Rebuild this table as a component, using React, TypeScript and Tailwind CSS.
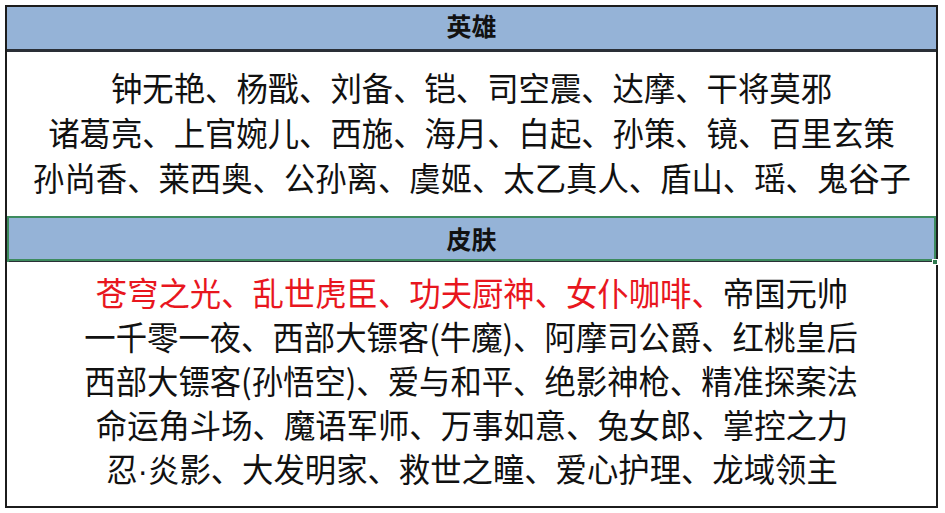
import React from 'react';

const heroLines = [
  '钟无艳、杨戬、刘备、铠、司空震、达摩、干将莫邪',
  '诸葛亮、上官婉儿、西施、海月、白起、孙策、镜、百里玄策',
  '孙尚香、莱西奥、公孙离、虞姬、太乙真人、盾山、瑶、鬼谷子',
];

const skinLines = [
  '一千零一夜、西部大镖客(牛魔)、阿摩司公爵、红桃皇后',
  '西部大镖客(孙悟空)、爱与和平、绝影神枪、精准探案法',
  '命运角斗场、魔语军师、万事如意、兔女郎、掌控之力',
];

const font = { fontFamily: '"Microsoft YaHei", "Noto Sans CJK SC", "Noto Sans", sans-serif' };

export default function App() {
  return (
    <div className="w-[945px] h-[513px] bg-white pt-[5px] pl-[5px]" style={font}>
      <div className="w-[933px] h-[503px] border-2 border-[#1c1c1c] flex flex-col">
        {/* 英雄 header */}
        <div className="h-[45px] bg-[#95b3d7] border-b-[3px] border-[#2a2f36] flex items-center justify-center pb-1">
          <span className="text-[25px] font-bold text-[#111]">英雄</span>
        </div>

        {/* heroes */}
        <div className="h-[164px] pt-[13px] flex flex-col items-center text-[33px] leading-[45px] text-[#111]">
          {heroLines.map((l) => (
            <div key={l} className="whitespace-nowrap scale-x-95">{l}</div>
          ))}
        </div>

        {/* 皮肤 header (selected cell) */}
        <div className="relative h-[46px] bg-[#95b3d7] border-2 border-[#3d8b5e] border-b-0 flex flex-col">
          <div className="flex-1 flex items-center justify-center">
            <span className="text-[25px] font-bold text-[#111]">皮肤</span>
          </div>
          <div className="h-[2px] bg-[#3d8b5e]" />
          <div className="h-[1px] bg-[#2a2f36]" />
          <div className="absolute -right-[4px] -bottom-[3px] w-[6px] h-[6px] bg-[#2f7a4f] border border-white" />
        </div>

        {/* skins */}
        <div className="flex-1 pt-[8px] flex flex-col items-center text-[33px] leading-[44px] text-[#111]">
          <div className="whitespace-nowrap scale-x-95">
            <span className="text-[#e8161e]">苍穹之光、乱世虎臣、功夫厨神、女仆咖啡、</span>
            帝国元帅
          </div>
          {skinLines.map((l) => (
            <div key={l} className="whitespace-nowrap scale-x-95">{l}</div>
          ))}
          <div className="whitespace-nowrap scale-x-95">
            忍<span className="font-['Liberation_Sans',sans-serif]">·</span>炎影、大发明家、救世之瞳、爱心护理、龙域领主
          </div>
        </div>
      </div>
    </div>
  );
}
